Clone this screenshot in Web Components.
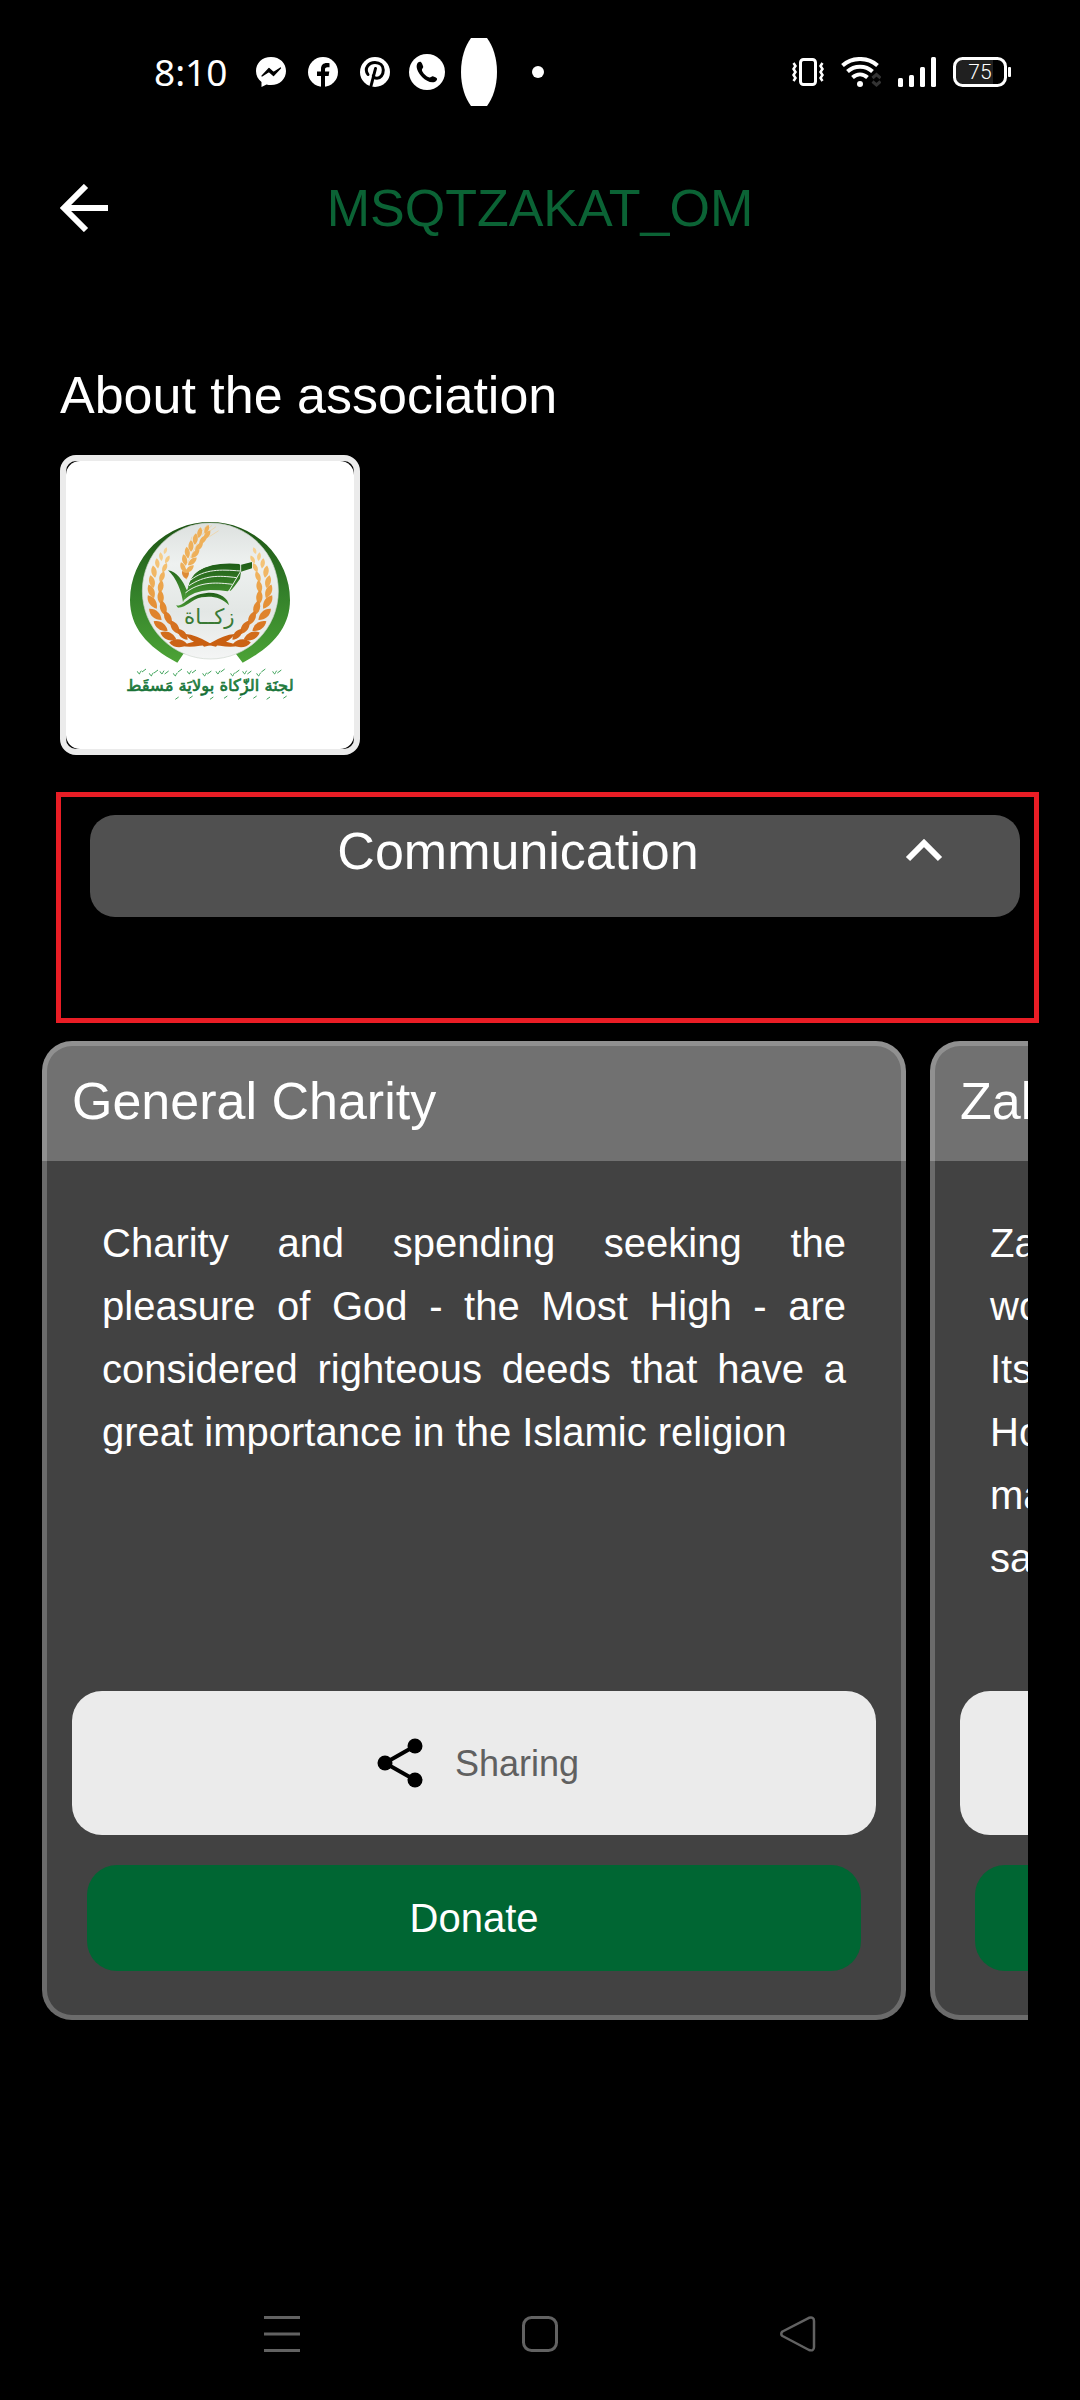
<!DOCTYPE html>
<html lang="en">
<head>
<meta charset="utf-8">
<meta name="viewport" content="width=device-width, initial-scale=1">
<title>MSQTZAKAT_OM</title>
<style>
  html { background: #000; }
  body { margin: 0; color: #fff; font-family: "Liberation Sans", Arial, sans-serif; }
</style>
</head>
<body>
<zakat-app></zakat-app>
<script>
function define(name, html, after) {
  const template = document.createElement('template');
  template.innerHTML = html;
  customElements.define(name, class extends HTMLElement {
    constructor() {
      super();
      this.attachShadow({ mode: 'open' }).append(template.content.cloneNode(true));
      if (after) after(this.shadowRoot);
    }
  });
}

define('status-bar', `
<style>
  :host { display: flex; justify-content: space-between; align-items: center; height: 144px; padding: 0 68px 0 154px; }
  .side { display: flex; align-items: center; }
  time { font: 37px/52px "Noto Sans", sans-serif; margin-right: 29px; }
  svg { display: block; flex: none; }
  .apps { display: flex; align-items: center; gap: 22px; }
  .apps .call { margin: 0 -3px; }
  .apps .oval { margin-left: -3px; }
  .apps .dot { margin-left: 13px; }
  .state { gap: 17px; }
  .battery { font-family: Roboto, sans-serif; }
</style>
<div class="side">
  <time>8:10</time>
  <div class="apps">
    <svg width="30" height="30" viewBox="0 0 30 30"><path fill="#fff" d="M15 0C6 0 0 6.200 0 14c0 4.500 2 8.300 5.500 11V30l5-2.500c1.400.4 3 .6 4.500.6 9 0 15-6.200 15-14S24 0 15 0z"/><path d="M6 19l7-7.500 4.500 4 7-4.500-7 7.500-4.500-4z" fill="#000" stroke="#000" stroke-width="1.200" stroke-linejoin="round"/></svg>
    <svg width="30" height="30" viewBox="0 0 30 30"><circle cx="15" cy="15" r="15" fill="#fff"/><path d="M13 30V19H9v-4.500h4V12c0-4 2.300-6 5.800-6 1 0 2 .1 2.700.2v4h-2c-2 0-2.500 1-2.500 2.200v2.100h4.300l-.7 4.500H17V30z"/></svg>
    <svg width="30" height="30" viewBox="0 0 30 30"><circle cx="15" cy="15" r="15" fill="#fff"/><g fill="none" stroke="#000" stroke-width="3" stroke-linecap="round"><path d="M8 17.500C3.500 11 9 5.500 15 5.500c5 0 8.300 3.200 8.300 7.500 0 5-3 8.300-6.300 8.300-2 0-3.500-1.300-3.700-2.500"/><path d="M15.500 11.500L11 29"/></g></svg>
    <svg class="call" width="36" height="36" viewBox="0 0 36 36"><circle cx="18" cy="18" r="18" fill="#fff"/><path d="M9 8.500c2-1.500 3-1 4 1l1.200 3c.4 1.300-1.500 2.300-1.300 3.500.6 3 4.500 6.800 7.500 7.400 1.300.2 2.200-1.500 3.500-1.200l3 1.200c1.600.7 1.500 2 .4 3.300-3.300 3.500-10 .5-14-3.500S5.500 12.500 9 8.500z"/></svg>
    <svg class="oval" width="36" height="68" viewBox="0 0 36 68"><path fill="#fff" d="M10 0H26C32 8 36 20 36 34S32 60 26 68H10C4 60 0 48 0 34S4 8 10 0z"/></svg>
    <svg class="dot" width="12" height="12"><circle cx="6" cy="6" r="6" fill="#fff"/></svg>
  </div>
</div>
<div class="side state">
  <svg width="32" height="30" viewBox="0 0 32 30" fill="none" stroke="#fff" stroke-width="3"><rect x="8.500" y="2.500" width="15" height="25" rx="3"/><path stroke-width="2.500" d="M1.500 6l2 3-2 3 2 3-2 3 2 3-2 3M30.500 6l-2 3 2 3-2 3 2 3-2 3 2 3"/></svg>
  <svg width="40" height="30" viewBox="0 0 40 30" fill="none" stroke="#fff" stroke-width="4"><path d="M1.500 8.500C11-.2 27-.2 36.500 8.500M6.500 14.500c7-6.500 18-6.500 25 0M11.500 20.500c4.500-4 10.500-4 15 0"/><circle cx="19" cy="27" r="3" fill="#fff" stroke="none"/><path stroke="#333" stroke-width="3" d="M31.500 21l4-3.500 4 3.500M31.500 24.500l4 3.500 4-3.500"/></svg>
  <svg width="38" height="30" fill="#fff"><rect y="21" width="5" height="9" rx="1.500"/><rect x="11" y="18" width="5" height="12" rx="1.500"/><rect x="22" y="10" width="5" height="20" rx="1.500"/><rect x="33" width="5" height="30" rx="1.500"/></svg>
  <svg class="battery" width="59" height="30" viewBox="0 0 59 30"><rect x="1.500" y="1.500" width="51" height="27" rx="8" fill="#000"/><path d="M9 2H40V28H9a7 7 0 0 1-7-7V9a7 7 0 0 1 7-7z" fill="#202020"/><rect x="1.500" y="1.500" width="51" height="27" rx="8" fill="none" stroke="#fff" stroke-width="3"/><rect x="55" y="10" width="3" height="10" rx="1" fill="#fff"/><text x="27" y="22" font-size="21" font-weight="300" text-anchor="middle" fill="#fff">75</text></svg>
</div>`);

define('app-header', `
<style>
  :host { display: grid; grid-template-columns: 48px 1fr 48px; align-items: center; height: 128px; padding: 0 60px; }
  button { padding: 0; border: 0; background: none; height: 48px; }
  svg { display: block; }
  h1 { margin: 0; text-align: center; font-size: 52px; font-weight: 400; line-height: 60px; color: #0b6335; }
</style>
<button aria-label="Back"><svg width="48" height="48" viewBox="0 0 48 48" fill="none" stroke="#fff" stroke-width="6"><path d="M26 2L4 24l22 22M4 24H48"/></svg></button>
<h1><slot></slot></h1>`);

const leaf = (x, y, angle, size, fill) =>
  `<path transform="translate(${x} ${y}) rotate(${angle}) scale(${size})" fill="${fill}" d="M0-22C13-9 12 9 0 22C-12 9-13-9 0-22z"/>`;

/* One half of the wreath; the other half is its mirror image. */
const branch = [
  [166, 152, 20, .5, '#f6d193'], [153, 170, -8, .6, '#f6cd88'], [172, 178, 28, .6, '#f5c980'],
  [142, 190, -8, .7, '#f4c377'], [164, 203, 24, .7, '#f3bf70'], [132, 215, -10, .85, '#f1b765'],
  [156, 230, 20, .8, '#f0b25d'], [126, 245, -14, .9, '#eeac55'], [152, 260, 10, .9, '#eca54c'],
  [124, 274, -22, 1, '#ea9f45'], [152, 292, -4, 1, '#e8983d'], [127, 306, -34, 1.1, '#e59137'],
  [160, 324, -14, 1.050, '#e28a31'], [136, 343, -48, 1.15, '#df832c'], [174, 354, -25, 1.050, '#dc7d28'],
  [152, 378, -56, 1.15, '#d97724'], [195, 382, -32, 1.1, '#d57120'], [175, 408, -66, 1.2, '#d26c1c'],
  [218, 403, -42, 1, '#cf6819'], [205, 430, -84, 1.25, '#cb6316']
].map(l => leaf(...l)).join('') + '<path fill="#c96012" d="M226 402Q258 404 300 430L322 436L318 440L295 435L270 437Q240 443 215 438Q235 428 252 425Q235 417 226 402z"/>';

const grain = [
  [227, 221, -8, .8], [219, 202, -22, .75], [239, 207, 48, .75], [224, 180, -12, .8], [247, 184, 48, .8],
  [232, 158, -8, .8], [256, 161, 44, .8], [243, 138, 0, .8], [267, 140, 42, .8], [256, 117, 6, .8],
  [279, 119, 40, .8], [269, 98, 12, .75], [291, 105, 36, .75], [290, 88, 25, .65]
].map(l => leaf(...l, '#eeb05a')).join('');

/* Small calligraphic marks above and below the association's name. */
const marks = [82, 118, 150, 190, 232, 278, 318, 362, 398, 440, 488]
  .map((x, i) => `M${x} ${514 + i % 2 * 6}q4 8 6 8q2-4 6-10M${x + 14} ${516 + i % 3 * 3}l12-9`).join('')
  + [196, 238, 300, 342, 384, 430, 470, 520].map((x, i) => `M${x} ${598 - i % 2 * 3}l10-7`).join('');

define('association-logo', `
<style>
  :host { display: block; box-sizing: border-box; width: 300px; height: 300px; border: 6px solid #ebebeb; border-radius: 16px; background: #000; }
  svg { display: block; width: 100%; height: 100%; border-radius: 14px; background: #fff; }
  text { font-family: "DejaVu Sans", sans-serif; }
</style>
<svg viewBox="-132 -117 864 864" role="img" aria-label="Association logo">
  <defs>
    <linearGradient id="ring" x2="0" y2="1"><stop offset="0" stop-color="#1d5313"/><stop offset=".5" stop-color="#33802a"/><stop offset="1" stop-color="#4ca336"/></linearGradient>
    <linearGradient id="disc" x2="0" y2="1"><stop offset="0" stop-color="#dde1df"/><stop offset=".3" stop-color="#eef1f0"/><stop offset=".65" stop-color="#e3e7e5"/><stop offset="1" stop-color="#f4f5f5"/></linearGradient>
    <linearGradient id="book" x2="0" y2="1"><stop offset="0" stop-color="#1f5d17"/><stop offset="1" stop-color="#4a9b35"/></linearGradient>
    <linearGradient id="script" x2="0" y2="1"><stop offset="0" stop-color="#3fa34a"/><stop offset="1" stop-color="#0c5b2c"/></linearGradient>
    <g id="branch">${branch}</g>
  </defs>
  <path fill="url(#ring)" d="M202 488C110 440 60 380 60 300A240 234 0 0 1 540 300C540 380 490 440 398 488L378 462H220z"/>
  <circle cx="301" cy="273" r="204" fill="url(#disc)" stroke="#cfd6cf" stroke-width="2"/>
  <use href="#branch"/>
  <use href="#branch" transform="translate(600 0) scale(-1 1)"/>
  <path fill="none" stroke="#f1cf96" stroke-width="2" d="M226 170L246 110M240 140L272 84M262 110L292 74M275 105L306 76M290 100L318 80M298 110L326 92M232 190L262 130"/>
  ${grain}
  <path fill="#dd8a35" d="M216 212Q214 228 226 235Q238 232 237 216Q226 224 216 212z"/>
  <g fill="url(#book)">
    <path d="M174 211C200 215 219 242 230 270C250 235 280 260 362 272Q372 262 390 236L393 215L426 205V186L390 195C350 192 305 190 266 213C245 226 240 245 232 270L219 307C215 275 200 235 174 211z"/>
    <path d="M198 316C222 322 232 285 290 279C326 275 355 295 357 316C336 292 305 287 275 292C242 298 232 323 204 323z"/>
    <path d="M219 302Q250 272 300 270Q330 270 353 274Q375 255 389 222V192Q310 185 266 213Q240 232 234 265z"/>
  </g>
  <path fill="none" stroke="#eaf0ea" stroke-width="3" d="M392 192V214L355 276M242 240C285 207 330 208 391 213M237 257C285 225 325 226 380 233M226 279C270 242 325 248 368 253"/>
  <text x="298" y="371" font-size="64" text-anchor="middle" fill="#3a7a35">زكــاة</text>
  <path fill="none" stroke="#3fa35a" stroke-width="3" d="${marks}"/>
  <text x="300" y="574" font-size="49" text-anchor="middle" fill="url(#script)" stroke="#17753a" stroke-width="2">لجنَة الزّكاة بولايَة مَسقَط</text>
</svg>`);

define('contact-panel', `
<style>
  :host { display: block; box-sizing: border-box; min-height: 231px; border: 5px solid #e91d25; padding: 18px 14px 18px 29px; }
  button { display: flex; align-items: flex-start; box-sizing: border-box; width: 100%; height: 102px; padding: 6px 72px 0 46px; border: 0; border-radius: 25px; background: #505050; color: #fff; font: inherit; font-size: 52px; line-height: 60px; }
  span { flex: 1; text-align: center; }
  svg { display: block; margin-top: 5px; }
</style>
<button aria-expanded="true"><span><slot></slot></span>
<svg width="48" height="48" viewBox="0 0 48 48" fill="none" stroke="#fff" stroke-width="6"><path d="M8 33L24 17l16 16"/></svg></button>`);

define('charity-card', `
<style>
  :host { display: flex; flex-direction: column; box-sizing: border-box; flex: 0 0 80vw; border: 5px solid rgba(255,255,255,.22); border-radius: 30px; padding: 0 25px 44px; background: linear-gradient(#717171 0 120px, #424242 0) border-box; }
  h2 { margin: 0; padding: 25px 0 30px; font-size: 52px; font-weight: 400; line-height: 60px; white-space: nowrap; }
  .text { margin: 51px 30px 0; min-height: 479px; font-size: 40px; line-height: 63px; text-align: justify; }
  button { display: flex; align-items: center; justify-content: center; border: 0; padding: 0; font: inherit; border-radius: 30px; }
  .share { height: 144px; padding: 2px 0 0 8px; gap: 32px; background: #ebebeb; color: #606060; font-size: 36px; }
  .donate { height: 106px; margin: 30px 15px 0; background: #006633; color: #fff; font-size: 40px; }
</style>
<h2><slot name="title"></slot></h2>
<div class="text"><slot></slot></div>
<button class="share"><svg width="46" height="52" viewBox="0 0 46 52"><path d="M38 8L8 25l30 17" fill="none" stroke="#000" stroke-width="4"/><circle cx="38" cy="8" r="7.500"/><circle cx="8" cy="25" r="7.500"/><circle cx="38" cy="42" r="7.500"/></svg>Sharing</button>
<button class="donate">Donate</button>`);

define('card-strip', `
<style>
  :host { display: flex; gap: 24px; overflow: hidden; }
</style>
<slot></slot>`);

define('system-nav', `
<style>
  :host { display: flex; align-items: center; justify-content: center; gap: 222px; height: 132px; }
  button { padding: 0; border: 0; background: none; width: 36px; height: 36px; }
  svg { display: block; fill: none; stroke: #626262; stroke-width: 3; }
</style>
<button aria-label="Menu"><svg width="36" height="36"><path d="M0 1.500H36M0 18H36M0 34.500H36"/></svg></button>
<button aria-label="Home"><svg width="36" height="36"><rect x="1.500" y="1.500" width="33" height="33" rx="8"/></svg></button>
<button aria-label="Back"><svg width="36" height="36"><path stroke-width="2.500" stroke-linejoin="round" d="M2.500 15.500L29 1.800Q34 .5 34 5V31Q34 35.500 29 34L2.500 20Q0 18 2.500 15.500z"/></svg></button>`);

define('zakat-app', `
<style>
  :host { display: flex; flex-direction: column; min-height: 100vh; background: #000; }
  main { flex: 1; }
  h2 { margin: 93px 60px 30px; font-size: 52px; font-weight: 400; line-height: 60px; }
  association-logo { margin-left: 60px; }
  contact-panel { margin: 37px 41px 18px 56px; }
  card-strip { margin: 0 52px 0 42px; }
  p { margin: 0; }
  .next { text-align: left; }
</style>
<status-bar></status-bar>
<app-header>MSQTZAKAT_OM</app-header>
<main>
  <h2>About the association</h2>
  <association-logo></association-logo>
  <contact-panel>Communication</contact-panel>
  <card-strip>
    <charity-card><span slot="title">General Charity</span><p>Charity and spending seeking the pleasure of God - the Most High - are considered righteous deeds that have a great importance in the Islamic religion</p></charity-card>
    <charity-card><span slot="title">Zak</span><p class="next">Za<br>wo<br>Its<br>Ho<br>ma<br>sa</p></charity-card>
  </card-strip>
</main>
<system-nav></system-nav>`);
</script>
</body>
</html>
